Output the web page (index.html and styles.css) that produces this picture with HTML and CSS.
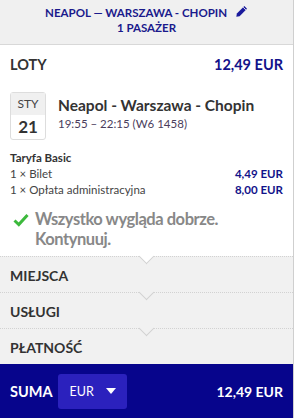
FILE: index.html
```html
<!DOCTYPE html>
<html lang="pl">

<head>
  <meta charset="UTF-8">
  <meta name="viewport" content="width=device-width, initial-scale=1.0">
  <title>Podsumowanie</title>
  <link rel="stylesheet" href="styles.css">
</head>

<body>
  <div class="summary">
    <div class="route">
      <div class="route-line">
        NEAPOL — WARSZAWA - CHOPIN
        <svg class="pencil" width="13" height="13" viewBox="0 0 16 16">
          <path d="M11.5 1.2 14.8 4.5 5.6 13.7 1.6 14.6 2.3 10.4Z" fill="#1a1a9c"/>
          <path d="M10 2.7 13.3 6" stroke="#f0f0f0" stroke-width="1.2"/>
        </svg>
      </div>
      <div class="route-line">1 PASAŻER</div>
    </div>

    <div class="flights">
      <div class="row head">
        <span class="title">LOTY</span>
        <span class="price big">12,49 EUR</span>
      </div>

      <div class="flight">
        <div class="date">
          <div class="month">STY</div>
          <div class="day">21</div>
        </div>
        <div class="flight-info">
          <div class="flight-name">Neapol - Warszawa - Chopin</div>
          <div class="flight-time">19:55 – 22:15 (W6 1458)</div>
        </div>
      </div>

      <div class="fare">
        <div class="fare-name">Taryfa Basic</div>
        <div class="row line">
          <span>1 × Bilet</span>
          <span class="price">4,49 EUR</span>
        </div>
        <div class="row line">
          <span>1 × Opłata administracyjna</span>
          <span class="price">8,00 EUR</span>
        </div>
      </div>

      <div class="ok">
        <svg class="check" width="16" height="14" viewBox="0 0 16 14">
          <path d="M1.5 7.5 5.8 11.5 14.5 2" fill="none" stroke="#3cb93c" stroke-width="3"/>
        </svg>
        <span>Wszystko wygląda dobrze.<br>Kontynuuj.</span>
      </div>
    </div>

    <div class="step first">MIEJSCA</div>
    <div class="step">USŁUGI</div>
    <div class="step">PŁATNOŚĆ</div>

    <div class="total">
      <span class="title">SUMA</span>
      <div class="currency">
        EUR
        <span class="caret"></span>
      </div>
      <span class="total-price">12,49 EUR</span>
    </div>
  </div>
</body>

</html>
```

FILE: styles.css
```css
* {
  margin: 0;
  padding: 0;
  box-sizing: border-box;
}

body {
  background: white;
  font-family: 'Lato', 'Noto Sans', sans-serif;
  color: #333;
}

.summary {
  width: 294px;
  height: 418px;
  border-right: 1px solid #cfcfcf;
  display: flex;
  flex-direction: column;
}

.route {
  background: #f0f0f0;
  border-bottom: 1px solid #d8d8d8;
  height: 45px;
  padding-top: 5px;
  text-align: center;
  color: #1a1a8c;
  font-weight: 700;
  font-size: 11.5px;
}

.route-line {
  line-height: 15px;
}

.pencil {
  margin-left: 5px;
  vertical-align: -1px;
}

.flights {
  padding: 0 10px;
  height: 211px;
}

.row {
  display: flex;
  justify-content: space-between;
  align-items: center;
}

.head {
  height: 38px;
}

.title {
  font-size: 14.5px;
  font-weight: 700;
  color: #333;
}

.price {
  color: #12128a;
  font-weight: 700;
}

.price.big {
  font-size: 14.5px;
}

.flight {
  display: flex;
  gap: 12px;
  margin-top: 9px;
}

.date {
  width: 36px;
  height: 48px;
  border: 1px solid #ddd;
  border-radius: 3px;
  text-align: center;
}

.month {
  background: #f0f0f0;
  height: 22px;
  line-height: 22px;
  font-size: 12px;
  color: #444;
}

.day {
  font-size: 17px;
  font-weight: 700;
  line-height: 24px;
  color: #333;
}

.flight-name {
  font-size: 15.5px;
  font-weight: 700;
  line-height: 20px;
  margin-top: 3px;
}

.flight-time {
  font-size: 11.5px;
  color: #4a3d5c;
  line-height: 18px;
}

.fare {
  margin-top: 10px;
  font-size: 11.5px;
}

.fare-name {
  font-weight: 700;
  line-height: 16px;
}

.line {
  line-height: 16px;
  color: #444;
}

.ok {
  display: flex;
  align-items: flex-start;
  gap: 6px;
  margin-top: 11px;
  padding-left: 3px;
  font-size: 16.5px;
  letter-spacing: -0.45px;
  font-weight: 700;
  color: #888;
  line-height: 20px;
}

.check {
  margin-top: 4px;
}

.step {
  position: relative;
  height: 36px;
  padding: 10px 10px 0;
  background: #f1f1f1;
  border-top: 1px dotted #d2d2d2;
  font-size: 14px;
  font-weight: 700;
  color: #333;
}

/* chevron notch under each divider */
.step::before {
  content: '';
  position: absolute;
  left: 141px;
  top: -6px;
  width: 10px;
  height: 10px;
  background: #f1f1f1;
  border-right: 1px solid #d2d2d2;
  border-bottom: 1px solid #d2d2d2;
  transform: rotate(45deg);
}

.step.first::before {
  background: white;
}

.total {
  flex: 1;
  background: #07058c;
  display: flex;
  align-items: center;
  padding: 0 10px;
  color: white;
}

.total .title {
  color: white;
  font-size: 14.5px;
}

.currency {
  margin-left: 5px;
  width: 69px;
  height: 35px;
  background: #2b21bd;
  border-radius: 3px;
  display: flex;
  align-items: center;
  justify-content: space-between;
  padding: 0 11px 0 12px;
  font-size: 12.5px;
}

.caret {
  width: 0;
  height: 0;
  border-left: 5px solid transparent;
  border-right: 5px solid transparent;
  border-top: 6px solid white;
}

.total-price {
  margin-left: auto;
  font-size: 14px;
  font-weight: 700;
}
```
